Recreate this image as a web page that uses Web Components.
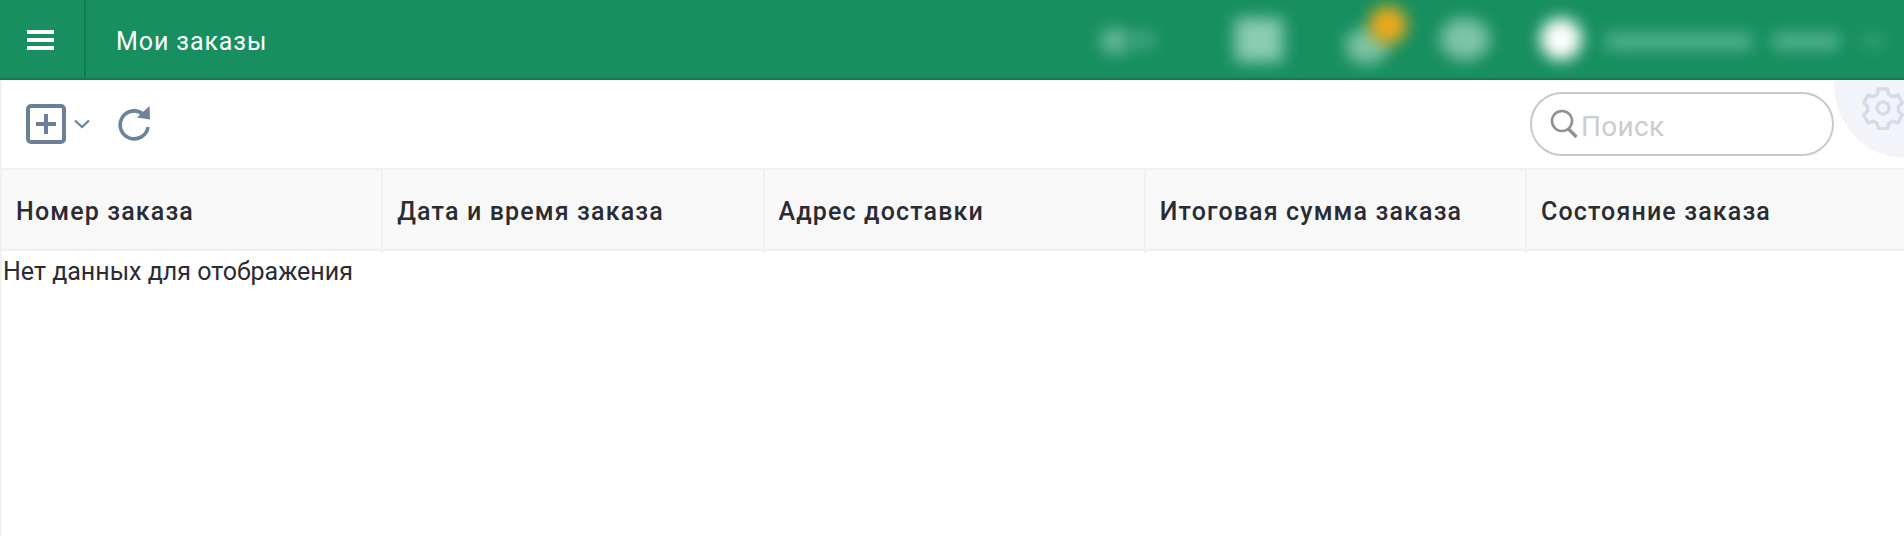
<!DOCTYPE html>
<html lang="ru">
<head>
<meta charset="utf-8">
<title>Мои заказы</title>
<style>
  html, body { margin: 0; height: 100%; background: #fff; }
  body { font-family: Roboto, "Noto Sans", sans-serif; overflow: hidden; }
</style>
</head>
<body>
<orders-page>
  <app-header title="Мои заказы"></app-header>
  <orders-toolbar></orders-toolbar>
  <orders-table></orders-table>
</orders-page>

<script>
class OrdersPage extends HTMLElement {
  constructor() {
    super();
    this.attachShadow({ mode: 'open' });
    this.shadowRoot.innerHTML = `
      <style>
        :host {
          display: block;
          height: 536px;
          box-sizing: border-box;
          background: #fff;
        }
      </style>
      <slot></slot>
    `;
  }
}

class AppHeader extends HTMLElement {
  constructor() {
    super();
    this.attachShadow({ mode: 'open' });
  }

  connectedCallback() {
    this.shadowRoot.innerHTML = `
      <style>
        :host {
          display: flex;
          align-items: stretch;
          height: 80px;
          box-sizing: border-box;
          background: #178f60;
          border-bottom: 2px solid #117a50;
          color: #fff;
        }
        .menu {
          width: 86px;
          flex: none;
          box-sizing: border-box;
          border-right: 2px solid #117a50;
          display: flex;
          align-items: center;
          padding: 2px 0 0 27px;
        }
        .menu svg { display: block; }
        h1 {
          margin: 0 0 0 30px;
          font: 400 25px/84px Roboto, sans-serif;
          letter-spacing: .9px;
          flex: 1;
        }
        .blurred {
          display: flex;
          align-items: center;
          flex: none;
          width: 826px;
          height: 78px;
          position: relative;
          overflow: hidden;
        }
        .b {
          position: absolute;
          filter: blur(8px);
        }
      </style>
      <div class="menu">
        <svg width="27" height="20" viewBox="0 0 27 20"><path fill="#fff" d="M0 0h27v4H0zM0 8h27v4H0zM0 16h27v4H0z"/></svg>
      </div>
      <h1></h1>
      <div class="blurred">
        <div class="b" style="left:22px;top:28px;width:30px;height:26px;border-radius:50%;background:#68b89a"></div>
        <div class="b" style="left:50px;top:32px;width:28px;height:16px;background:#45a681"></div>
        <div class="b" style="left:157px;top:18px;width:48px;height:44px;background:#8accb2"></div>
        <div class="b" style="left:267px;top:28px;width:44px;height:36px;border-radius:50%;background:#7cc3a6"></div>
        <div class="b" style="left:291px;top:6px;width:38px;height:38px;border-radius:50%;background:#f0aa1a"></div>
        <div class="b" style="left:362px;top:18px;width:50px;height:42px;border-radius:50%;background:#7fc4a8"></div>
        <div class="b" style="left:462px;top:18px;width:42px;height:42px;border-radius:50%;background:#fff"></div>
        <div class="b" style="left:528px;top:34px;width:146px;height:15px;background:#5bb594"></div>
        <div class="b" style="left:695px;top:34px;width:66px;height:15px;background:#5bb594"></div>
        <div class="b" style="left:785px;top:36px;width:20px;height:10px;background:#45a681"></div>
      </div>
    `;
    this.shadowRoot.querySelector('h1').textContent = this.getAttribute('title') || '';
  }
}

class OrdersToolbar extends HTMLElement {
  constructor() {
    super();
    this.attachShadow({ mode: 'open' });
    this.shadowRoot.innerHTML = `
      <style>
        :host {
          display: flex;
          align-items: center;
          position: relative;
          height: 88px;
          box-sizing: border-box;
          padding: 0 0 0 26px;
          border-left: 2px solid #f0f0f0;
          overflow: hidden;
        }
        svg { display: block; flex: none; }
        .add { margin-left: -2px; }
        .caret { margin-left: 8px; }
        .refresh { margin-left: 27px; }
        search-box { margin-left: auto; margin-right: 70px; }
        .corner {
          position: absolute;
          right: -70px;
          top: -72px;
          width: 140px;
          height: 150px;
          border-radius: 50%;
          background: #f2f4f9;
        }
        .gear { position: absolute; left: 1859px; top: 6px; }
      </style>
      <svg class="add" width="40" height="40" viewBox="0 0 40 40" fill="none" stroke="#6a7f99">
        <rect x="2" y="2" width="36" height="36" rx="3" stroke-width="4"/>
        <path d="M20 10v20M10 20h20" stroke-width="4"/>
      </svg>
      <svg class="caret" width="16" height="10" viewBox="0 0 16 10" fill="none" stroke="#6a7f99" stroke-width="2.2">
        <path d="M1 1.5l7 6.5 7-6.5"/>
      </svg>
      <svg class="refresh" width="34" height="36" viewBox="0 0 34 36" fill="none" stroke="#6f829b" stroke-width="3.6">
        <path d="M26 8A14 14 0 1 0 31 21"/>
        <path fill="#6f829b" stroke="none" d="M32.5 0L33 13.5 20 11.5z"/>
      </svg>
      <search-box></search-box>
      <div class="corner"></div>
      <svg class="gear" width="44" height="44" viewBox="0 0 44 44" fill="none" stroke="#d3dce8" stroke-width="3.4" stroke-linejoin="round">
        <path d="M17.5 3h9l1.4 5.6 3.6 2 5.4-1.6 4.4 7.8-4 4 .1 2.2-.1 2 4 4-4.4 7.8-5.4-1.6-3.6 2-1.4 5.6h-9l-1.4-5.6-3.6-2-5.4 1.6-4.4-7.8 4-4-.1-2 .1-2.2-4-4L7.1 9l5.4 1.6 3.6-2z"/>
        <circle cx="22" cy="22" r="6"/>
      </svg>
    `;
  }
}

class SearchBox extends HTMLElement {
  constructor() {
    super();
    this.attachShadow({ mode: 'open' });
    this.shadowRoot.innerHTML = `
      <style>
        :host {
          display: flex;
          align-items: center;
          width: 304px;
          height: 64px;
          box-sizing: border-box;
          border: 2px solid #c9c9c9;
          border-radius: 32px;
          padding-left: 18px;
          background: #fff;
        }
        span {
          margin-left: 3px;
          font: 400 28px/1 Roboto, sans-serif;
          color: #cccccc;
          letter-spacing: .3px;
          padding-top: 5px;
        }
        svg { display: block; flex: none; }
      </style>
      <svg width="28" height="30" viewBox="0 0 28 30" fill="none" stroke="#909090" stroke-width="2.6">
        <circle cx="12" cy="12" r="10"/>
        <path d="M18.5 20l8 8" stroke-width="3.4"/>
      </svg>
      <span>Поиск</span>
    `;
  }
}

class OrdersTable extends HTMLElement {
  constructor() {
    super();
    this.attachShadow({ mode: 'open' });
    const columns = [
      'Номер заказа',
      'Дата и время заказа',
      'Адрес доставки',
      'Итоговая сумма заказа',
      'Состояние заказа'
    ];
    this.shadowRoot.innerHTML = `
      <style>
        :host {
          display: block;
          height: 368px;
          box-sizing: border-box;
          border-left: 2px solid #f0f0f0;
        }
        .head {
          display: grid;
          grid-template-columns: repeat(5, 381.25px);
          height: 83px;
          box-sizing: border-box;
          background: #f8f8f8;
          border-top: 2px solid #f0f0f0;
          border-bottom: 2px solid #f0f0f0;
        }
        .head div {
          box-sizing: border-box;
          padding-left: 14px;
          border-right: 2px solid #f0f0f0;
          font: 500 25px/83px Roboto, sans-serif;
          letter-spacing: 1.15px;
          color: #2b2b33;
          white-space: nowrap;
        }
        .head div:last-child { border-right: 0; }
        .empty {
          font: 400 25px/41px Roboto, sans-serif;
          color: #2b2b33;
          padding-left: 1px;
        }
      </style>
      <div class="head"></div>
      <div class="empty">Нет данных для отображения</div>
    `;
    const head = this.shadowRoot.querySelector('.head');
    columns.forEach(name => {
      const cell = document.createElement('div');
      cell.textContent = name;
      head.appendChild(cell);
    });
  }
}

customElements.define('orders-page', OrdersPage);
customElements.define('app-header', AppHeader);
customElements.define('search-box', SearchBox);
customElements.define('orders-toolbar', OrdersToolbar);
customElements.define('orders-table', OrdersTable);
</script>
</body>
</html>
